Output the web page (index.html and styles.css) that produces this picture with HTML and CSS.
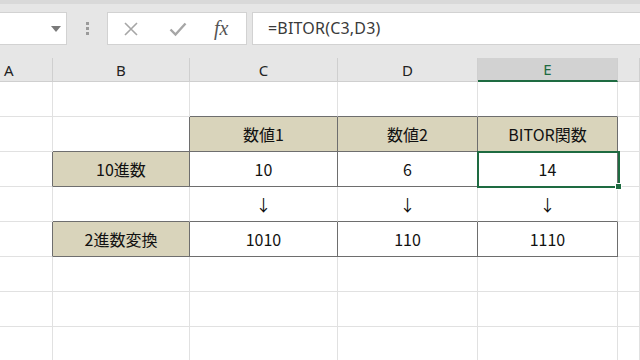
FILE: index.html
```html
<!doctype html>
<html>
 <head>
	<meta charset="UTF-8">
	<title>BITOR関数</title>
	<link rel="stylesheet" href="styles.css">
 </head>
 <body>
	<div class="toolbar">
		<div class="namebox">
			<svg width="10" height="6" viewBox="0 0 10 6"><path d="M0 0h10L5 6z" fill="#7a7a7a"/></svg>
		</div>
		<div class="grip"><i></i><i></i><i></i></div>
		<div class="fxbtns">
			<svg width="16" height="16" viewBox="0 0 16 16"><path d="M2 2L14 14M14 2L2 14" stroke="#a6a6a6" stroke-width="1.6" fill="none"/></svg>
			<svg width="18" height="16" viewBox="0 0 18 16"><path d="M1.5 8.5L6.5 13.5L16.5 2.5" stroke="#a6a6a6" stroke-width="2.4" fill="none"/></svg>
			<span class="fx">fx</span>
		</div>
		<div class="formula">=BITOR(C3,D3)</div>
	</div>

	<div class="sheet">
		<!-- 列見出し -->
		<div class="hd hd_a">A</div>
		<div class="hd">B</div>
		<div class="hd">C</div>
		<div class="hd">D</div>
		<div class="hd hd_sel">E</div>
		<div class="hd"></div>

		<!-- 1行目 -->
		<div class="c"></div><div class="c"></div>
		<div class="c b"></div><div class="c b"></div><div class="c b"></div><div class="c"></div>

		<!-- 2行目 -->
		<div class="c"></div><div class="c r b"></div>
		<div class="c r b tan">数値1</div>
		<div class="c r b tan">数値2</div>
		<div class="c r b tan">BITOR関数</div>
		<div class="c"></div>

		<!-- 3行目 -->
		<div class="c r"></div>
		<div class="c r b tan">10進数</div>
		<div class="c r b">10</div>
		<div class="c r b">6</div>
		<div class="c r b sel">14</div>
		<div class="c"></div>

		<!-- 4行目 -->
		<div class="c"></div>
		<div class="c b"></div>
		<div class="c b">↓</div>
		<div class="c b">↓</div>
		<div class="c b">↓</div>
		<div class="c"></div>

		<!-- 5行目 -->
		<div class="c r"></div>
		<div class="c r b tan">2進数変換</div>
		<div class="c r b">1010</div>
		<div class="c r b">110</div>
		<div class="c r b">1110</div>
		<div class="c"></div>

		<!-- 6〜8行目 -->
		<div class="c"></div><div class="c"></div><div class="c"></div><div class="c"></div><div class="c"></div><div class="c"></div>
		<div class="c"></div><div class="c"></div><div class="c"></div><div class="c"></div><div class="c"></div><div class="c"></div>
		<div class="c"></div><div class="c"></div><div class="c"></div><div class="c"></div><div class="c"></div><div class="c"></div>
	</div>
 </body>
</html>
```
FILE: styles.css
```css
html,body{margin:0;padding:0}
body{
	width:640px;height:360px;overflow:hidden;
	background:#fff;
	font-family:"Noto Sans","Noto Sans CJK JP",sans-serif;
}

/* 数式バー */
.toolbar{
	height:58px;
	box-sizing:border-box;
	background:#e6e6e6;
	border-top:4px solid #d9d9d9;
	padding-top:8px;
	display:flex;
	align-items:flex-start;
}
.namebox{
	width:67px;height:33px;
	box-sizing:border-box;
	background:#fff;
	border:1px solid #d2d2d2;
	border-left:none;
	display:flex;align-items:center;justify-content:flex-end;
	padding-right:5px;
}
.grip{
	width:40px;height:33px;
	display:flex;flex-direction:column;align-items:center;justify-content:center;gap:2px;
}
.grip i{display:block;width:3px;height:3px;background:#9a9a9a}
.fxbtns{
	width:140px;height:33px;
	box-sizing:border-box;
	background:#fff;
	border:1px solid #d2d2d2;
	display:flex;align-items:center;
	padding-left:15px;gap:30px;
}
.fx{
	font-family:"Liberation Serif",serif;
	font-style:italic;
	font-size:20px;
	color:#555;
	margin-left:-3px;
}
.formula{
	flex:1;height:33px;
	margin-left:5px;
	box-sizing:border-box;
	background:#fff;
	border:1px solid #d2d2d2;
	border-right:none;
	padding-left:15px;
	font-size:16px;
	line-height:31px;
	color:#3a3a3a;
	letter-spacing:0.2px;
}

/* シート */
.sheet{
	display:grid;
	grid-template-columns:53px 137px 148px 140px 140px 1fr;
	grid-template-rows:24px repeat(8,35px);
}
.hd{
	background:#e6e6e6;
	border-right:1px solid #cfcfcf;
	border-bottom:1px solid #cfcfcf;
	box-sizing:border-box;
	text-align:center;
	font-size:15px;
	line-height:24px;
	color:#222;
}
.hd_a{text-align:left;padding-left:4px}
.hd_sel{
	background:#d2d2d2;
	color:#1e6b41;
	border-bottom:2px solid #1e6b41;
	line-height:23px;
}
.c{
	box-sizing:border-box;
	border-right:1px solid #e1e1e1;
	border-bottom:1px solid #e1e1e1;
	display:flex;align-items:center;justify-content:center;
	font-family:"Noto Sans CJK JP",sans-serif;
	font-size:16px;
	color:#111;
}
.c.r{border-right-color:#6e6e6e}
.c.b{border-bottom-color:#6e6e6e}
.tan{background:#d9d4bb}

/* 選択セル */
.sel{position:relative}
.sel::after{
	content:"";
	position:absolute;
	left:-1px;top:-1px;right:-3px;bottom:-2px;
	border:2px solid #1e6b41;
}
.sel::before{
	content:"";
	position:absolute;
	right:-5px;bottom:-4px;
	width:5px;height:5px;
	background:#1e6b41;
	border:1px solid #fff;
	z-index:1;
}
```
